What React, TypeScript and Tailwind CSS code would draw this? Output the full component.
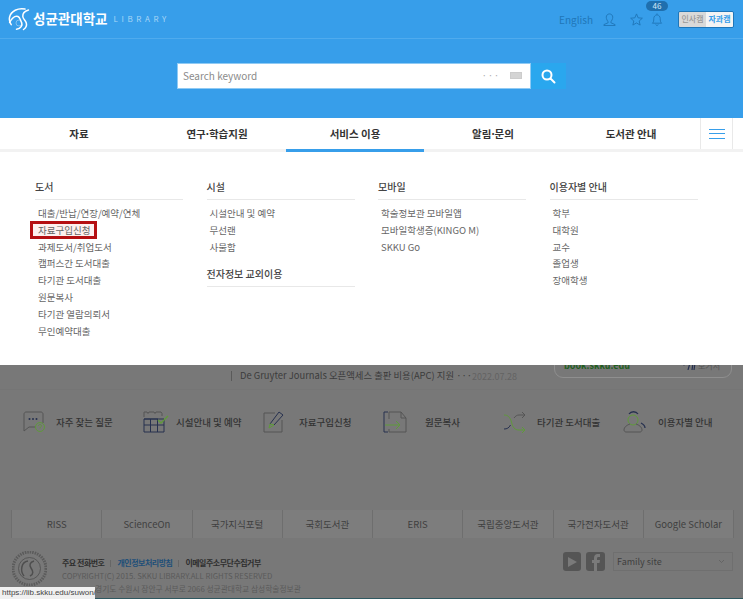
import React from "react";

const columns = [
  { groups: [{ title: "도서", items: ["대출/반납/연장/예약/연체", "자료구입신청", "과제도서/취업도서", "캠퍼스간 도서대출", "타기관 도서대출", "원문복사", "타기관 열람의뢰서", "무인예약대출"] }] },
  { groups: [{ title: "시설", items: ["시설안내 및 예약", "무선랜", "사물함"] }, { title: "전자정보 교외이용", items: [] }] },
  { groups: [{ title: "모바일", items: ["학술정보관 모바일앱", "모바일학생증(KINGO M)", "SKKU Go"] }] },
  { groups: [{ title: "이용자별 안내", items: ["학부", "대학원", "교수", "졸업생", "장애학생"] }] },
];

const nav = [["자료"], ["연구", "학습지원"], ["서비스 이용"], ["알림", "문의"], ["도서관 안내"]];
const links = ["RISS", "ScienceOn", "국가지식포털", "국회도서관", "ERIS", "국립중앙도서관", "국가전자도서관", "Google Scholar"];

function Logo() {
  return (
    <svg width="24" height="24" viewBox="0 0 24 24" fill="none" stroke="#fff" strokeWidth="1.5" strokeLinecap="round">
      <path d="M17 2C10 .6 3 4 1.600 10c-.7 3 .2 5.600 1.600 7.600" />
      <path d="M1.600 15.500C4 11 7 8.500 10 9.500c2 .8 2 3 3.500 6 1.300 2.500-.5 6.500-5 6.800" />
      <path d="M20.500 3C17 4 14.500 6 14.800 9.500c.2 2.500 2.700 4 3.500 6.500.7 2.500-.6 5-2.800 6.500" />
      <circle cx="11" cy="16" r="3" strokeWidth=".6" opacity=".6" />
    </svg>
  );
}

function QuickIcon({ kind }: { kind: number }) {
  const navy = "#26304f";
  const grey = "#555";
  const green = "#5f9a3a";
  if (kind === 0)
    return (
      <svg width="23" height="22" viewBox="0 0 23 22" fill="none" strokeWidth="1">
        <path d="M3 1h15c1 0 2 1 2 2v9M13 16H6l-5 4V3c0-1 1-2 2-2" stroke={grey} />
        <circle cx="17" cy="16" r="4.500" stroke={green} />
        <path d="M15.500 15c0-2 3-2 3 0 0 1-1.500 1-1.500 2.500" stroke={green} />
        <circle cx="6.500" cy="8" r="1" fill={navy} />
        <circle cx="10" cy="8" r="1" fill={navy} />
        <circle cx="13.500" cy="8" r="1" fill={navy} />
      </svg>
    );
  if (kind === 1)
    return (
      <svg width="26" height="22" viewBox="0 0 26 22" fill="none" strokeWidth="1">
        <path d="M1 6V1h3l1 1.500L6 1h5l1 1.500L13 1h5l1 1.500V5" stroke={grey} />
        <path d="M1 8v13h20V8zM1 14h20M7.500 8v13M14.500 8v13M1 8h14" stroke={navy} />
        <path d="M15 9l3 3 7-7" stroke={green} strokeWidth="1.400" />
      </svg>
    );
  if (kind === 2)
    return (
      <svg width="23" height="22" viewBox="0 0 23 22" fill="none" strokeWidth="1">
        <path d="M12 2H1v19h18V9" stroke={grey} />
        <path d="M7 13l9-12 4 3-9 10" stroke={navy} />
        <path d="M7 13l4 1-5 3z" stroke={green} />
      </svg>
    );
  if (kind === 3)
    return (
      <svg width="24" height="22" viewBox="0 0 24 22" fill="none" strokeWidth="1">
        <path d="M5 1H1v20h4" stroke={navy} />
        <path d="M6 8V1h12l5 6v14H6v-3M18 1v6h5" stroke={grey} />
        <path d="M2 14h15M13 10l4 4-4 4" stroke={green} />
      </svg>
    );
  if (kind === 4)
    return (
      <svg width="23" height="21" viewBox="0 0 23 21" fill="none" strokeWidth="1">
        <path d="M1 3c4 0 6 2 7.500 7 1 5 3 8 7.500 8h6M19 15l3 3-3 3" stroke={green} />
        <path d="M11 6c1.500-2 3-3 5-3h6M19 0l3 3-3 3" stroke={grey} />
        <path d="M1 17c3 0 5-1 6.500-4" stroke={navy} />
      </svg>
    );
  return (
    <svg width="24" height="22" viewBox="0 0 24 22" fill="none" strokeWidth="1">
      <circle cx="10" cy="9" r="5" stroke={green} />
      <path d="M7 13c-3 1-6 3-6 6 0 1 1 2 2 2h14c1 0 2-1 2-2 0-3-3-5-6-6" stroke={grey} />
      <path d="M6 3c2-3 7-3 9 0M18 12c2 1 4 3 4 5" stroke={navy} strokeWidth="1.300" />
    </svg>
  );
}

const quick = [
  { label: "자주 찾는 질문", gap: "gap-[10px]" },
  { label: "시설안내 및 예약", gap: "gap-[7px]" },
  { label: "자료구입신청", gap: "gap-[13px]" },
  { label: "원문복사", gap: "gap-[18px]" },
  { label: "타기관 도서대출", gap: "gap-[11px]" },
  { label: "이용자별 안내", gap: "gap-[11px]" },
];

export default function App() {
  return (
    <div className="relative flex h-[599px] w-[743px] flex-col overflow-hidden bg-[#787878] font-['Noto_Sans_CJK_KR','Noto_Sans',sans-serif]">
      {/* Blue header */}
      <header className="h-[118px] shrink-0 bg-[#379eea]">
        <div className="flex h-[39px] items-center border-b border-[#4fabee] pl-[8px] pr-[9px]">
          <Logo />
          <span className="ml-[1px] text-[13.500px] font-bold leading-none text-white">성균관대학교</span>
          <span className="ml-[6px] text-[8px] leading-none tracking-[3.600px] text-[#a9d6f6]">LIBRARY</span>
          <span className="ml-auto text-[10px] text-[#1f76b8]">English</span>
          <svg className="ml-[10px]" width="13" height="13" viewBox="0 0 14 14" fill="none" stroke="#1f76b8" strokeWidth="1">
            <path d="M7 1c2 0 3.500 1.500 3.500 3.500S9 9 8.500 9.500v1l4.500 2v1H1v-1l4.500-2v-1C5 9 3.500 6.500 3.500 4.500S5 1 7 1z" />
          </svg>
          <svg className="ml-[14px]" width="13" height="13" viewBox="0 0 14 14" fill="none" stroke="#1f76b8" strokeWidth="1">
            <path d="M7 1l1.800 4.200 4.500.4-3.400 3 1 4.400L7 10.700 3.100 13l1-4.400-3.400-3 4.500-.4z" />
          </svg>
          <div className="relative ml-[8px] h-[13px] w-[12px]">
            <svg width="12" height="13" viewBox="0 0 12 14" fill="none" stroke="#1f76b8" strokeWidth="1">
              <path d="M1 11c1.500-1 1.500-3 1.500-5S4 2 6 2s3.500 2 3.500 4 0 4 1.500 5zM6 .5V2M4.500 12.500c.5 1 2.500 1 3 0" />
            </svg>
            <span className="absolute left-[-5px] top-[-12px] flex h-[10px] w-[22px] items-center justify-center rounded-full bg-[#1f6fae] text-[8px] leading-none text-[#d5e9f8]">46</span>
          </div>
          <div className="ml-[15px] flex h-[17px] w-[56px] overflow-hidden rounded-[2px] border border-[#1f76b8] text-[8px] font-medium leading-none">
            <span className="flex flex-1 items-center justify-center bg-[#d9d9d9] text-[#9a9a9a]">인사캠</span>
            <span className="flex flex-1 items-center justify-center bg-[#f4f4f4] font-bold text-[#379eea]">자과캠</span>
          </div>
        </div>
        <div className="mt-[24px] flex h-[26px] pl-[177px]">
          <div className="flex w-[354px] items-center border border-[#8fcaf4] bg-white pb-[1px] pl-[5px] pr-[8px]">
            <span className="text-[10px] text-[#8a8a8a]">Search keyword</span>
            <span className="ml-auto text-[9px] leading-none tracking-[1px] text-[#aaa]">···</span>
            <span className="ml-[10px] h-[7px] w-[12px] border border-[#ccc] bg-[#d4d4d4]" />
          </div>
          <div className="flex w-[35px] items-center justify-center bg-[#2aa7ee]">
            <svg width="15" height="15" viewBox="0 0 15 15" fill="none" stroke="#fff" strokeWidth="2" strokeLinecap="round">
              <circle cx="6" cy="6" r="4.500" />
              <path d="M9.500 9.500L13.500 13.500" />
            </svg>
          </div>
        </div>
      </header>

      {/* Nav */}
      <nav className="flex h-[34px] shrink-0 border-b-[3px] border-[#f2f2f2] bg-white pl-[10px]">
        {nav.map((n, i) => (
          <div key={n[0]} className="relative flex w-[138px] items-center justify-center whitespace-pre pt-[1px] text-[10.500px] font-bold text-[#333]">
            {n[0]}
            {n[1] && <span className="mx-[-1.500px]">·</span>}
            {n[1]}
            {i === 2 && <span className="absolute inset-x-0 bottom-[-3px] h-[3px] bg-[#379eea]" />}
          </div>
        ))}
        <div className="flex h-full w-[33px] items-center justify-center border-x border-[#e9e9e9]">
          <span className="flex w-[16px] flex-col gap-[3.500px]">
            <i className="h-px bg-[#379eea]" />
            <i className="h-px bg-[#379eea]" />
            <i className="h-px bg-[#379eea]" />
          </span>
        </div>
      </nav>

      {/* Mega menu */}
      <section className="z-10 flex h-[213px] shrink-0 gap-[23.500px] bg-white pl-[35px] pt-[28px]">
        {columns.map((c) => (
          <div key={c.groups[0].title} className="w-[148px]">
            {c.groups.map((g) => (
              <div key={g.title} className="mb-[12px]">
                <h3 className="h-[20px] border-b border-[#e8e8e8] text-[10px] font-medium leading-[14px] text-[#444]">{g.title}</h3>
                {g.items.length > 0 && (
                  <ul className="mt-[5px] pl-[3px]">
                    {g.items.map((it) => (
                      <li key={it} className="relative h-[16.800px] text-[9.500px] leading-[16.800px] text-[#666]">
                        {it === "자료구입신청" && (
                          <span className="absolute left-[-8px] top-[-0.500px] h-[18px] w-[67px] border-[3px] border-[#b50f12] bg-[#fdf0ef]" />
                        )}
                        <span className="relative">{it}</span>
                      </li>
                    ))}
                  </ul>
                )}
              </div>
            ))}
          </div>
        ))}
      </section>

      {/* Dimmed page */}
      <main className="relative flex min-h-0 flex-1 flex-col overflow-hidden text-[#3a3a3a]">
        <div className="flex h-[25px] shrink-0 border-b border-[#757575]">
          <div className="ml-[231px] mt-[6px] flex h-[10px] items-center whitespace-nowrap border-l border-[#5a5a5a] pl-[8px] text-[9.400px] leading-none text-[#3c3c3c]">
            <span className="w-[232px] shrink-0">De Gruyter Journals 오픈액세스 출판 비용(APC) 지원 ···</span>
            <span className="text-[9px] text-[#636363]">2022.07.28</span>
          </div>
          <div className="ml-auto mr-[11px] mt-[-20px] flex h-[33px] w-[178px] shrink-0 items-end justify-between rounded-[9px] border border-[#8f8f8f] pb-[7px] pl-[9px] pr-[11px]">
            <span className="text-[9px] font-bold leading-none text-[#1f5f1f]">book.skku.edu</span>
            <span className="flex items-center gap-[2px] text-[8px] leading-none text-[#555]">
              <svg width="14" height="8" viewBox="0 0 14 8" fill="none" stroke="#26304f" strokeWidth="1.200"><path d="M0 1l2 2 2-2M6 8l2-7h3l-1 7M12 8l1-7" /></svg>
              보거서
            </span>
          </div>
        </div>

        <div className="mt-[20px] flex h-[24px] shrink-0 pl-[23px]">
          {quick.map((q, i) => (
            <div key={q.label} className={`flex w-[120.400px] items-center ${q.gap}`}>
              <QuickIcon kind={i} />
              <span className="text-[9.500px] font-medium text-[#333]">{q.label}</span>
            </div>
          ))}
        </div>

        <div className="ml-[11px] mt-[76px] flex h-[28px] w-[723px] shrink-0 border-l border-[#6e6e6e] bg-[#7d7d7d]">
          {links.map((l) => (
            <div key={l} className="flex w-[90.250px] items-center justify-center border-r border-[#6e6e6e] text-[9.500px] text-[#3f3f3f]">
              {l}
            </div>
          ))}
        </div>

        <footer className="flex min-h-0 flex-1 items-start pl-[12px] pr-[10px] pt-[13px]">
          <svg width="35" height="35" viewBox="0 0 35 35" fill="none" stroke="#4e4e4e" className="shrink-0">
            <circle cx="17.500" cy="17.500" r="16.500" strokeWidth="3" strokeDasharray="1.500 1" opacity=".7" />
            <circle cx="17.500" cy="17.500" r="11" strokeWidth=".8" />
            <path d="M12 25C8 20 9 11 16 10M22 10c-4 1-5 4-3 7s3 6-1 8" strokeWidth="1.500" />
          </svg>
          <div className="ml-[15px] mt-[6px] flex flex-col text-[7.750px] leading-[12.500px] text-[#5a5a5a]">
            <div className="flex h-[13px] items-center whitespace-nowrap text-[8px] font-bold tracking-[-0.500px] text-[#2e2e2e]">
              주요 전화번호
              <i className="mx-[6px] h-[7px] w-px bg-[#666]" />
              <span className="text-[#1e4f78]">개인정보처리방침</span>
              <i className="mx-[6px] h-[7px] w-px bg-[#666]" />
              이메일주소무단수집거부
            </div>
            <div className="whitespace-nowrap">COPYRIGHT(C) 2015. SKKU LIBRARY.ALL RIGHTS RESERVED</div>
            <div className="whitespace-nowrap pl-[33px]">경기도 수원시 장안구 서부로 2066 성균관대학교 삼성학술정보관</div>
          </div>
          <div className="ml-auto mt-[1px] flex h-[19px] items-center">
            <span className="flex h-[19px] w-[18px] items-center justify-center rounded-[3px] bg-[#555]">
              <svg width="9" height="10" viewBox="0 0 9 10"><path d="M0 0l9 5-9 5z" fill="#7a7a7a" /></svg>
            </span>
            <span className="ml-[5px] flex h-[19px] w-[19px] items-end justify-center overflow-hidden rounded-[3px] bg-[#555]">
              <svg width="10" height="17" viewBox="0 0 10 17"><path d="M3 17V9H1V6h2V4c0-2.500 1.500-4 3.500-4H9v3H7.500C6.500 3 6 3.500 6 4.500V6h3l-.5 3H6v8z" fill="#7a7a7a" /></svg>
            </span>
            <div className="ml-[8px] flex h-[19px] w-[120px] items-center justify-between border border-[#6f6f6f] pl-[3px] pr-[8px] text-[9px] text-[#3f3f3f]">
              Family site
              <svg width="5" height="3" viewBox="0 0 5 3" fill="none" stroke="#5c5c5c" strokeWidth=".7"><path d="M0 0l2.500 2.500L5 0" /></svg>
            </div>
          </div>
        </footer>
        <div className="h-px shrink-0 bg-[#2f5860]" />
      </main>

      {/* Browser status tooltip */}
      <div className="absolute bottom-0 left-0 flex h-[12px] w-[95px] items-center whitespace-nowrap bg-[#f0f0f0] pl-[2px] font-['Liberation_Sans',sans-serif] text-[8px] leading-none text-[#444]">
        https://lib.skku.edu/suwon/
      </div>
    </div>
  );
}
